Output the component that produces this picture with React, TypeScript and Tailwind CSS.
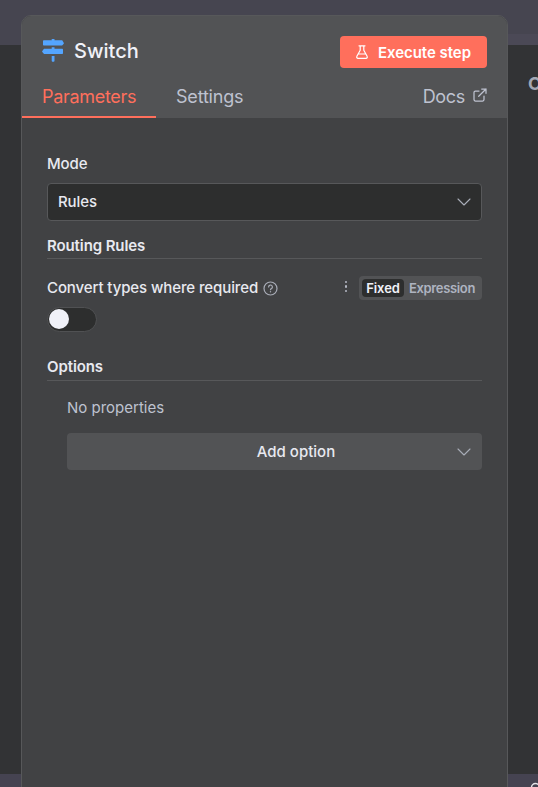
import React from "react";

function Chevron() {
  return (
    <svg width="14" height="8" viewBox="0 0 14 8" fill="none" stroke="#a9adb8" strokeWidth="1.1" strokeLinecap="round" strokeLinejoin="round">
      <path d="M1 1l6 6 6-6" />
    </svg>
  );
}

function SignpostIcon() {
  return (
    <svg width="22" height="23" viewBox="0 0 22 23" fill="#54a5ff">
      <path d="M9.700 0h2.800v1.300h7.200c.3 0 .5.100.7.300L21.700 3.700c.3.300.3.700 0 1L20.400 6.200c-.2.200-.4.300-.7.300H2c-.6 0-1-.4-1-1V2.300c0-.6.4-1 1-1h7.700z" />
      <path d="M9.700 8.300h2.800v1.500h7.500c.6 0 1 .4 1 1v3.300c0 .6-.4 1-1 1H2.500c-.3 0-.5-.1-.7-.3L.3 13c-.3-.3-.3-.7 0-1l1.500-1.900c.2-.2.400-.3.700-.3h7.200z" />
      <path d="M9.700 17h2.800v4.800c0 .6-.3 1-.9 1h-1c-.6 0-.9-.4-.9-1z" />
    </svg>
  );
}

function FlaskIcon() {
  return (
    <svg width="12" height="14" viewBox="0 0 12 14" fill="none" stroke="#fff" strokeWidth="1.200" strokeLinecap="round" strokeLinejoin="round">
      <path d="M3 .8h6M4.200 .8v4.500L.9 11.300a1.300 1.300 0 0 0 1.100 2h8a1.300 1.300 0 0 0 1.100-2L7.800 5.300V.8M2.400 9h7.200" />
    </svg>
  );
}

function ExternalIcon() {
  return (
    <svg width="14" height="14" viewBox="0 0 14 14" fill="none" stroke="#bec2d0" strokeWidth="1.250" strokeLinecap="round" strokeLinejoin="round">
      <path d="M8.700 1H13v4.300M13 1L5.700 8.300M11 8v3.600c0 .8-.6 1.400-1.400 1.400H2.400C1.600 13 1 12.400 1 11.600V4.400C1 3.600 1.600 3 2.400 3H6" />
    </svg>
  );
}

function HelpIcon() {
  return (
    <svg width="15" height="15" viewBox="0 0 15 15" fill="none" stroke="#a9adb8" strokeWidth="1.200" strokeLinecap="round">
      <circle cx="7.500" cy="7.500" r="6.500" />
      <path d="M5.600 5.900a1.900 1.900 0 1 1 2.800 1.700c-.6.3-.9.600-.9 1.100" />
      <path d="M7.500 10.700v.1" strokeWidth="1.400" />
    </svg>
  );
}

function Backdrop() {
  return (
    <div className="flex h-full flex-col bg-[#323335]">
      <div className="flex h-[45px] items-end justify-end bg-[#464550]">
        <div className="h-[11px] w-[30px] bg-[#4b4956]" />
      </div>
      <div className="flex flex-1 justify-end">
        <div className="mt-[27px] w-[10px] overflow-hidden text-[18px] leading-6 font-bold text-[#a4a8b4]">O</div>
      </div>
      <div className="flex h-[13px] justify-end overflow-hidden bg-[#454351]">
        <svg width="8" height="13" viewBox="0 0 8 13" fill="none" stroke="#e4e4e8" strokeWidth="1.500">
          <circle cx="5.500" cy="13.500" r="4" />
        </svg>
      </div>
    </div>
  );
}

export default function App() {
  return (
    <div className="relative h-[787px] w-[538px] overflow-hidden font-['Inter',sans-serif]">
      <Backdrop />
      <main className="absolute top-[15px] left-[21px] flex h-[790px] w-[487px] flex-col overflow-hidden rounded-t-[10px] border border-[#57585a] bg-[#414244]">
        <header className="flex h-[102px] shrink-0 flex-col justify-between bg-[#525355]">
          <div className="flex items-center justify-between pt-5 pr-5 pl-5">
            <div className="flex items-center gap-[10px]">
              <span className="pb-[3px]"><SignpostIcon /></span>
              <h1 className="pb-[2px] text-[20px] leading-7 font-medium text-[#f0f1f8]">Switch</h1>
            </div>
            <button className="flex h-8 w-[147px] items-center justify-center gap-[10px] rounded bg-[#ff6f5c] text-[15px] font-semibold tracking-[-0.05px] whitespace-nowrap text-white">
              <FlaskIcon />
              <span className="pt-[2px]">Execute step</span>
            </button>
          </div>
          <nav className="flex h-[42px] items-stretch text-[18px] leading-6 tracking-[-0.3px] text-[#bec2d0]">
            <div className="w-[134px] border-b-2 border-[#ff6f5c] pt-[9px] pl-5 text-[#ff6f5c]">Parameters</div>
            <div className="pt-[9px] pl-5 tracking-[-0.2px]">Settings</div>
            <div className="ml-auto flex gap-2 pt-[9px] pr-[20px]">
              Docs
              <span className="pt-[3px]"><ExternalIcon /></span>
            </div>
          </nav>
        </header>
        <section className="flex flex-col px-[25px] pt-[36px] text-[15px] leading-5 tracking-[-0.1px] text-[#e8e9f0]">
          <label className="font-medium">Mode</label>
          <div className="mt-[9px] flex h-[38px] items-center justify-between rounded border border-[#57585a] bg-[#2d2e2e] pr-[10px] pl-[10px]">
            <span className="font-medium">Rules</span>
            <Chevron />
          </div>
          <h2 className="mt-[15px] h-[23px] border-b border-[#57585a] font-semibold">Routing Rules</h2>
          <div className="mt-[17px] flex h-6 items-center">
            <span className="font-medium">Convert types where required</span>
            <span className="ml-[5px] pt-px"><HelpIcon /></span>
            <div className="mr-[12px] ml-auto flex flex-col gap-[2px] pb-[3px]">
              <i className="h-[2.500px] w-[2.500px] rounded-full bg-[#b4b8c4]" />
              <i className="h-[2.500px] w-[2.500px] rounded-full bg-[#b4b8c4]" />
              <i className="h-[2.500px] w-[2.500px] rounded-full bg-[#b4b8c4]" />
            </div>
            <div className="flex h-6 w-[123px] items-center rounded bg-[#525355] pl-[3px] text-[13px] font-semibold text-[#aeb3c0]">
              <span className="flex h-[18px] w-[42px] items-center justify-center rounded bg-[#2d2e2e] tracking-[-0.1px] text-[#f0f1f8]">Fixed</span>
              <span className="ml-[5px] tracking-[-0.35px]">Expression</span>
            </div>
          </div>
          <div className="mt-[7px] flex h-[25px] w-[50px] items-center rounded-full border border-[#505153] bg-[#2d2e2e] pb-px pl-px">
            <div className="h-5 w-5 rounded-full bg-[#f0f1f8]" />
          </div>
          <h2 className="mt-[25px] h-[24px] border-b border-[#57585a] font-semibold">Options</h2>
          <div className="mt-[17px] ml-5 tracking-normal text-[#bec2d0]">No properties</div>
          <button className="mt-[15px] ml-5 flex h-[37px] items-center rounded bg-[#525355] pr-[11px] pl-[68px] font-medium">
            <span className="flex-1 tracking-normal">Add option</span>
            <Chevron />
          </button>
        </section>
      </main>
    </div>
  );
}
